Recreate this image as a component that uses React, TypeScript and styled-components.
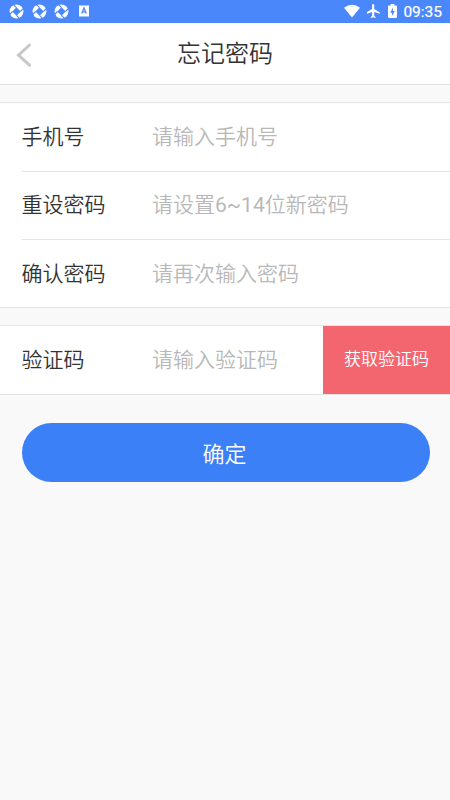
import React from 'react';
import styled, { createGlobalStyle } from 'styled-components';

const Global = createGlobalStyle`
  * { box-sizing: border-box; }
  body { margin: 0; background: #f9f9f9; font-family: Roboto, "Noto Sans CJK SC", sans-serif; color: #333; font-weight: 350; }
  button, input { font-family: inherit; font-weight: inherit; }
`;
const Page = styled.div`width: 450px; height: 800px; background: #f9f9f9; overflow: hidden;`;
const StatusBar = styled.div`
  height: 22.5px; background: #4a87fb; color: #fff; display: flex; justify-content: space-between;
  align-items: center; padding: 0 8px 0 9px; font-size: 15.5px; font-weight: 400;
`;
const Cluster = styled.div`display: flex; align-items: center; gap: 7.5px; svg { display: block; }`;
const Clock = styled.span`line-height: 22px; margin-left: -1px; padding-top: 1px; -webkit-text-stroke: 0.2px #fff;`;
const Header = styled.header`
  height: 62.5px; background: #fff; border-bottom: 1px solid #e0e0e0; display: grid;
  grid-template-columns: 60px 1fr 60px; align-items: center;
`;
const Back = styled.button`border: 0; background: none; padding: 3px 0 0 16px; display: flex;`;
const Title = styled.h1`margin: 0; padding-top: 1px; font-size: 24px; line-height: 36px; font-weight: inherit; text-align: center;`;
const Group = styled.section`
  margin-top: 17px; background: #fff; border-top: 1px solid #e6e6e6; border-bottom: 1px solid #e2e2e2;
`;
const Row = styled.label<{ $height: number; $line?: boolean }>`
  display: flex; align-items: center; height: ${p => p.$height}px; margin-left: 21.5px;
  border-bottom: ${p => (p.$line ? '1px solid #e4e4e4' : '0')};
`;
const Label = styled.span`width: 130.5px; font-size: 21px; line-height: 30px;`;
const Field = styled.input`
  flex: 1; min-width: 0; border: 0; outline: 0; padding: 0; background: none; font-size: 21px; height: 34px;
  font-family: Roboto, "Noto Sans CJK SC DemiLight", "Noto Sans CJK SC", sans-serif; font-weight: 400;
  &::placeholder { color: #b8b8b8; opacity: 1; }
`;
const CodeButton = styled.button`
  width: 127px; height: 100%; border: 0; background: #f36670; color: #fff; font-size: 17px; padding: 0 0 4px;
`;
const Submit = styled.button`
  display: block; width: 408px; height: 59px; margin: 28.5px 0 0 21.5px; border: 0; border-radius: 30px;
  background: #3b80f7; color: #fff; font-size: 22px; padding: 0 2px 1px 0;
`;

const Aperture = () => (
  <svg width="15" height="15" viewBox="0 0 16 16">
    <circle cx="8" cy="8" r="7.4" fill="#fff" />
    <path d="M8 3.500 12.500 8 8 12.500 3.500 8Z" fill="#4a87fb" />
    <path d="M8 3.800 4.800.6M12.200 8 15.400 4.800M8 12.200l3.200 3.200M3.800 8 .6 11.200" stroke="#4a87fb" strokeWidth="1.2" />
  </svg>
);

export default function App() {
  return (
    <Page>
      <Global />
      <StatusBar>
        <Cluster>
          <Aperture /><Aperture /><Aperture />
          <svg width="13" height="12"><rect x="2" y="0.500" width="10" height="11" fill="#fff" /><path d="M4.700 8.500 7 3l2.300 5.500M5.700 6.900h2.600" fill="none" stroke="#4a87fb" strokeWidth="1.3" /></svg>
        </Cluster>
        <Cluster>
          <svg width="16" height="14" viewBox="0 0 17 14" fill="#fff"><path d="M0 3.500Q8.500-2.800 17 3.500L8.500 14Z" /></svg>
          <svg width="13" height="14" viewBox="3 2 18 20" fill="#fff"><path d="M21 16v-2l-8-5V3.500a1.500 1.500 0 0 0-3 0V9l-8 5v2l8-2.500V19l-2 1.500V22l3.500-1 3.500 1v-1.500L13 19v-5.500z" /></svg>
          <svg width="9" height="14" viewBox="7 2 10 20" preserveAspectRatio="none" fill="#fff"><path d="M15.670 4H14V2h-4v2H8.330C7.600 4 7 4.600 7 5.330v15.330C7 21.400 7.600 22 8.330 22h7.330c.74 0 1.340-.6 1.340-1.330V5.330C17 4.600 16.400 4 15.670 4zM11.500 19v-4.500H9.500L12.500 7v5H14.500z" /></svg>
          <Clock>09:35</Clock>
        </Cluster>
      </StatusBar>
      <Header>
        <Back aria-label="返回"><svg width="16" height="24" fill="none" stroke="#c8c8c8" strokeWidth="3" strokeLinecap="round"><path d="M13.500 2 2.500 12.200l11 10" /></svg></Back>
        <Title>忘记密码</Title>
      </Header>
      <Group>
        <Row $height={68.5} $line><Label>手机号</Label><Field placeholder="请输入手机号" /></Row>
        <Row $height={68.5} $line><Label>重设密码</Label><Field placeholder="请设置6~14位新密码" /></Row>
        <Row $height={67.2}><Label>确认密码</Label><Field placeholder="请再次输入密码" /></Row>
      </Group>
      <Group>
        <Row $height={67.6}><Label>验证码</Label><Field placeholder="请输入验证码" /><CodeButton>获取验证码</CodeButton></Row>
      </Group>
      <Submit>确定</Submit>
    </Page>
  );
}
